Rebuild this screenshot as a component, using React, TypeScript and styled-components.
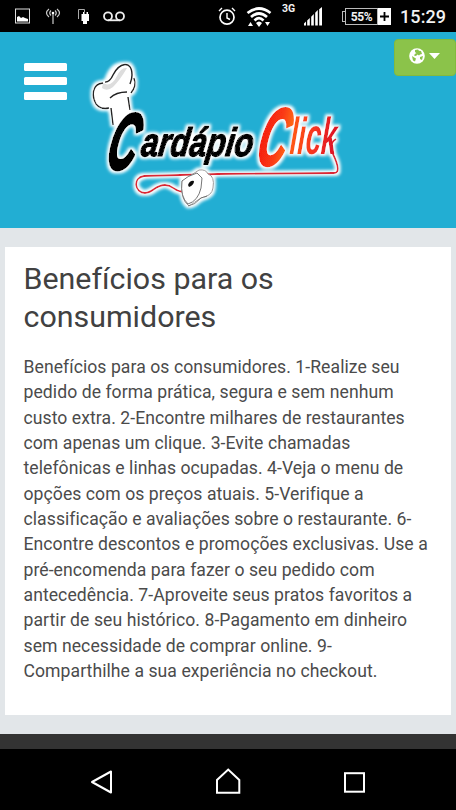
import React from "react";
import styled, { createGlobalStyle } from "styled-components";

const GlobalStyle = createGlobalStyle`
  * { box-sizing: border-box; }
  body { margin: 0; background: #000; font-family: Roboto, "Liberation Sans", sans-serif; }
  svg { display: block; }
`;

const Screen = styled.div`
  width: 456px;
  height: 810px;
  display: flex;
  flex-direction: column;
  overflow: hidden;
`;

const StatusBar = styled.div`
  height: 32px;
  flex: none;
  background: #000;
  color: #f2f2f2;
  display: flex;
  justify-content: space-between;
  padding: 0 10px 0 14px;
`;

const StatusGroup = styled.div`
  display: flex;
  align-items: flex-start;
`;

const StatusIcon = styled.div<{ $left?: number; $top: number }>`
  flex: none;
  margin: ${(p) => p.$top}px 0 0 ${(p) => p.$left ?? 0}px;
`;

const Network = styled.span`
  margin: 3px 0 0 10px;
  width: 15px;
  font-size: 10.5px;
  line-height: 11px;
  font-weight: 700;
  white-space: nowrap;
`;

const Battery = styled.div`
  display: flex;
  margin: 8px 0 0 19px;
  height: 17px;
  width: 49px;
`;

const BatteryCap = styled.span`
  width: 3px;
  height: 11px;
  margin-top: 3px;
  border: 1px solid #bbb;
  border-right: 0;
`;

const BatteryLevel = styled.span`
  width: 33px;
  border: 1px solid #bbb;
  font-size: 12px;
  line-height: 16px;
  font-weight: 700;
  text-align: center;
  letter-spacing: -0.3px;
`;

const BatteryCharge = styled.span`
  width: 13px;
  background: #fff;
  display: flex;
  align-items: center;
  justify-content: center;
`;

const Clock = styled.span`
  margin: 6px 0 0 9px;
  width: 46px;
  font-size: 18px;
  line-height: 21px;
  font-weight: 500;
  letter-spacing: 0.1px;
  white-space: nowrap;
`;

const Header = styled.header`
  height: 196px;
  flex: none;
  background: #22aed3;
  display: flex;
  align-items: flex-start;
`;

const MenuButton = styled.button`
  margin: 31px 0 0 23.5px;
  padding: 0;
  border: 0;
  background: none;
  display: flex;
  flex-direction: column;
  gap: 6.3px;
`;

const MenuLine = styled.span`
  width: 43.5px;
  height: 8px;
  border-radius: 1.5px;
  background: #fff;
`;

const Logo = styled.svg`
  flex: none;
  margin: 20px 0 0 17px;
`;

const LanguageButton = styled.button`
  margin: 7px 0 0 auto;
  width: 62px;
  height: 37px;
  padding: 0 2px 3px 0;
  border: 1px solid #83ba3d;
  border-radius: 4px;
  background: #8bc34a;
  display: flex;
  align-items: center;
  justify-content: center;
  gap: 4px;
`;

const Content = styled.main`
  height: 506px;
  flex: none;
  background: #e2e6e9;
  padding: 19px 5.5px 19px 5px;
`;

const Card = styled.article`
  height: 468px;
  background: #fff;
  padding: 13px 0 0 18.5px;
  color: #414141;
`;

const Title = styled.h1`
  margin: 0;
  font-size: 30.4px;
  line-height: 38px;
  font-weight: 400;
  letter-spacing: 0;
`;

const Body = styled.p`
  margin: 19px 0 0;
  font-size: 17.6px;
  line-height: 25.35px;
  letter-spacing: 0.06px;
  color: #4b4b4b;
  white-space: nowrap;
`;

const Line = styled.span`
  display: block;
`;

const Footer = styled.div`
  height: 15px;
  flex: none;
  background: #333;
`;

const NavBar = styled.nav`
  height: 61px;
  flex: none;
  background: #000;
  display: flex;
  align-items: flex-start;
  padding: 18px 0 0 90px;
  gap: 98px;
`;

const lines = [
  "Benefícios para os consumidores. 1-Realize seu",
  "pedido de forma prática, segura e sem nenhum",
  "custo extra. 2-Encontre milhares de restaurantes",
  "com apenas um clique. 3-Evite chamadas",
  "telefônicas e linhas ocupadas. 4-Veja o menu de",
  "opções com os preços atuais. 5-Verifique a",
  "classificação e avaliações sobre o restaurante. 6-",
  "Encontre descontos e promoções exclusivas. Use a",
  "pré-encomenda para fazer o seu pedido com",
  "antecedência. 7-Aproveite seus pratos favoritos a",
  "partir de seu histórico. 8-Pagamento em dinheiro",
  "sem necessidade de comprar online. 9-",
  "Comparthilhe a sua experiência no checkout.",
];

function Wordmark() {
  return (
    <g fontFamily="Liberation Sans, sans-serif" fontWeight="700" fontStyle="italic" strokeLinejoin="round">
      <text transform="translate(104 169) skewX(-13)" fontSize="79" textLength="29" lengthAdjust="spacingAndGlyphs" fill="#050505" stroke="#050505" strokeWidth="3.5">C</text>
      <text transform="translate(140 156) skewX(-8)" fontSize="40" textLength="112" lengthAdjust="spacingAndGlyphs" fill="#050505" stroke="#050505" strokeWidth="1.6">ardápio</text>
      <text transform="translate(254 165) skewX(-13)" fontSize="81" textLength="29" lengthAdjust="spacingAndGlyphs" fill="url(#fire)" stroke="url(#fire)" strokeWidth="3">C</text>
      <text transform="translate(289 154) skewX(-4)" fontSize="52" textLength="47" lengthAdjust="spacingAndGlyphs" fill="url(#flame)">lick</text>
    </g>
  );
}

function HatShape() {
  return <path d="M113 125L110 108Q98 110 94 97Q92 82 106 82Q112 64 124 64Q135 64 134 82Q137 87 129 95L130 114Z" />;
}

function CableShape() {
  return <path d="M336 139Q328 144 333 154Q342 173 334 173L217 174L144 176C132 178 135 193 145 193C153 193 155 185 165 185C174 185 174 192 184 192" />;
}

function BrandLogo() {
  return (
    <Logo width="280" height="165" viewBox="84 52 280 165" aria-label="Cardápio Click">
      <defs>
        <linearGradient id="fire" x1="0" x2="1"><stop stopColor="#f51b11" /><stop offset=".6" stopColor="#fa3b12" /><stop offset="1" stopColor="#ff6b13" /></linearGradient>
        <linearGradient id="flame" x1="0" x2="1"><stop stopColor="#ff5c12" /><stop offset=".5" stopColor="#f63420" /><stop offset="1" stopColor="#d90d27" /></linearGradient>
        <filter id="halo" x="-10%" y="-10%" width="120%" height="120%">
          <feMorphology in="SourceAlpha" operator="dilate" radius="2" result="grown" />
          <feGaussianBlur in="grown" stdDeviation="1.8" result="soft" />
          <feFlood floodColor="#fff" />
          <feComposite in2="soft" operator="in" result="glow" />
          <feMerge><feMergeNode in="glow" /><feMergeNode in="SourceGraphic" /></feMerge>
        </filter>
      </defs>
      <g filter="url(#halo)">
        <g fill="#fff"><HatShape /></g>
        <path d="M103 83Q111 88 117 76Q121 67 127 68Q120 80 113 87Q107 92 102 88Z" fill="#ddd" />
        <path d="M103 83C91 84 92 97 96 104Q101 110 109 108M105 82Q110 82 113 75C119 63 132 59 132 75Q132 79 130 84M134 78Q137 86 131 93M110 98Q116 92 127 92M111 108L113 125M128 97L130 110" fill="none" stroke="#222" strokeWidth="1.4" />
        <g fill="none" stroke="#db2735" strokeWidth="1.8"><CableShape /></g>
        <path d="M182 181L199 170Q206 169 208 174Q215 176 213 188Q212 196 201 198L189 206Q180 200 182 181Z" fill="#fff" stroke="#999" strokeWidth="1" />
        <Wordmark />
        <path d="M182 181Q180 197 188 204Q198 201 201 188L202 178L197 173Q187 176 182 181M188 206Q195 205 201 198L207 196" fill="#fff" stroke="#666" strokeWidth=".9" />
        <path d="M188 185Q190 180 194 181Q194 185 189 187Z" fill="#111" />
      </g>
    </Logo>
  );
}

function NotificationIcons() {
  return (
    <StatusGroup>
      <StatusIcon $top={8}>
        <svg width="17" height="17" viewBox="0 0 17 17"><rect x="1.5" y="1" width="14" height="14" fill="none" stroke="#ddd" /><path d="M3 13.5V9l2-1 2 2 2-1 2 1 3 1v2.5Z" fill="#fff" /></svg>
      </StatusIcon>
      <StatusIcon $left={14} $top={8}>
        <svg width="16" height="17" viewBox="0 0 16 17" fill="none" stroke="#ccc" strokeWidth="1.2"><path d="M8 6v10M4 1Q-1 5 4 9M12 1Q17 5 12 9M6 2.5Q3.5 5 6 7.5M10 2.5Q12.5 5 10 7.5" /><circle cx="8" cy="5" r="1.3" fill="#fff" stroke="none" /></svg>
      </StatusIcon>
      <StatusIcon $left={16} $top={8}>
        <svg width="13" height="17" viewBox="0 0 13 17"><path d="M1.5 11V1.5h6V4" fill="none" stroke="#aaa" /><path d="M4.5 6H6V4h1.5v2h2V4H11v2h1v7h-2v3H6v-3H4.5Z" fill="#fff" /></svg>
      </StatusIcon>
      <StatusIcon $left={12} $top={11}>
        <svg width="24" height="11" viewBox="0 0 24 11" fill="none" stroke="#eee" strokeWidth="1.8"><circle cx="6" cy="5.3" r="4" /><circle cx="18" cy="5.3" r="4" /><path d="M6 9.3h12" /></svg>
      </StatusIcon>
    </StatusGroup>
  );
}

function SystemIcons() {
  return (
    <StatusGroup>
      <StatusIcon $top={7}>
        <svg width="18" height="19" viewBox="0 0 18 19" fill="none" stroke="#fff" strokeWidth="1.7"><circle cx="9" cy="10.2" r="7" /><path d="M9 6v5l3 1.5M1 4l3-3M14 1l3 3" strokeWidth="1.4" /></svg>
      </StatusIcon>
      <StatusIcon $left={10} $top={7}>
        <svg width="26" height="21" viewBox="0 0 26 21"><path d="M1.5 6Q13-3 24.5 6M5 10Q13 3 21 10M8.5 13.5Q13 9 17.5 13.5" fill="none" stroke="#fff" strokeWidth="2.7" /><path d="M10 16Q13 13 16 16L13 20ZM2 19l2.5-4L7 19ZM19 15h5l-2.5 4Z" fill="#fff" /></svg>
      </StatusIcon>
      <Network>3G</Network>
      <StatusIcon $left={7} $top={7}>
        <svg width="19" height="19" viewBox="0 0 19 19" fill="#fff"><path d="M0 18.5v-2l2-2v4ZM3.2 18.5v-5l2.6-2.5v7.5ZM7.2 18.5V9.7l2.6-2.6v11.4ZM11.2 18.5V5.7l2.6-2.6v15.4ZM15.2 18.5V2.2L18 0v18.5Z" /></svg>
      </StatusIcon>
      <Battery>
        <BatteryCap /><BatteryLevel>55%</BatteryLevel>
        <BatteryCharge><svg width="9" height="9" viewBox="0 0 9 9"><path d="M4.5 0v9M0 4.5h9" stroke="#000" strokeWidth="1.8" /></svg></BatteryCharge>
      </Battery>
      <Clock>15:29</Clock>
    </StatusGroup>
  );
}

export default function App() {
  return (
    <Screen>
      <GlobalStyle />
      <StatusBar><NotificationIcons /><SystemIcons /></StatusBar>
      <Header>
        <MenuButton aria-label="Menu"><MenuLine /><MenuLine /><MenuLine /></MenuButton>
        <BrandLogo />
        <LanguageButton aria-label="Idioma">
          <svg width="16" height="16" viewBox="0 0 16 16"><circle cx="8" cy="8" r="7.8" fill="#fff" /><path d="M6 2l3-.5 1 1.3 2 .2 1 3-2 .5-1 1-1.5-1L7 8 5 7.5l1-1.7 1.5-.5L6 4ZM3 8l3 2 1 .5-1 3-2-1ZM11 9l3-1-1 4-2-1Z" fill="#8bc34a" /></svg>
          <svg width="11" height="6" viewBox="0 0 11 6"><path d="M0 0h11L5.5 6Z" fill="#fff" /></svg>
        </LanguageButton>
      </Header>
      <Content>
        <Card>
          <Title>Benefícios para os<br />consumidores</Title>
          <Body>{lines.map((line) => <Line key={line}>{line}</Line>)}</Body>
        </Card>
      </Content>
      <Footer />
      <NavBar>
        <svg width="24" height="28" viewBox="0 0 24 28" fill="none" stroke="#fff" strokeWidth="2"><path d="M2 15L21 4.5V25.5Z" strokeLinejoin="round" /></svg>
        <svg width="32" height="28" viewBox="0 0 32 28" fill="none" stroke="#fff" strokeWidth="2"><path d="M5 25.7V13L16.2 2.5L27.3 13V25.7Z" /></svg>
        <svg width="24" height="28" viewBox="0 0 24 28" fill="none" stroke="#fff" strokeWidth="2"><rect x="3" y="6.2" width="19" height="18.5" /></svg>
      </NavBar>
    </Screen>
  );
}
